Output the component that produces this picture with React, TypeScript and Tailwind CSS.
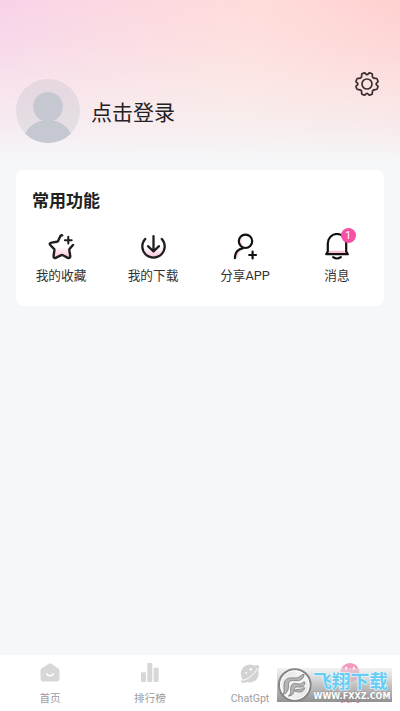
import React from "react";

const cjk = "font-['Roboto','Noto_Sans_CJK_SC',sans-serif]";

function Gear() {
  return (
    <svg className="h-[26px] w-[26px]" viewBox="0 0 26 26" fill="none" stroke="#3b2c2f" strokeWidth="1.7" strokeLinejoin="round">
      <path d="M10.3 1.9 C11.4 1.3 11.4 3.7 13 3.7 S14.6 1.3 15.7 1.9 L18 2.8 C19.2 3.3 17.4 5.2 18.9 6.7 S22.6 6.7 23.1 8 L24 10.3 C24.5 11.5 22.1 11.4 22.1 13 S24.5 14.5 24 15.7 L23.1 18 C22.6 19.3 20.4 17.8 18.9 19.3 S19.2 22.7 18 23.2 L15.7 24.1 C14.6 24.7 14.6 22.3 13 22.3 S11.4 24.7 10.3 24.1 L8 23.2 C6.8 22.7 8.6 20.8 7.1 19.3 S3.4 19.3 2.9 18 L2 15.7 C1.5 14.5 3.9 14.6 3.9 13 S1.5 11.5 2 10.3 L2.9 8 C3.4 6.7 5.6 8.2 7.1 6.7 S6.8 3.3 8 2.8 Z" />
      <circle cx="13" cy="13" r="5" />
    </svg>
  );
}

function Star() {
  return (
    <svg className="h-7 w-7" viewBox="0 0 28 28" fill="none" stroke="#201d20" strokeWidth="2.4" strokeLinecap="round" strokeLinejoin="round">
      <defs>
        <linearGradient id="starFill" x1="0" y1="0" x2="0" y2="1">
          <stop offset=".5" stopColor="#fff" />
          <stop offset="1" stopColor="#f9bfd6" />
        </linearGradient>
      </defs>
      <path d="M15.2 2.4 C14 1.9 13.3 3 12.8 4.2 L11.1 8 Q10.8 8.7 9.9 8.8 L4.6 9.6 C2.4 10 2.2 11 3.7 12.5 L7 15.8 Q7.5 16.3 7.4 17.2 L6.6 22.6 C6.3 25 7.4 25.5 9.2 24.6 L13.9 22.3 Q14.9 21.8 15.9 22.3 L20.4 24.6 C22.2 25.5 23.6 24.8 23.2 22.6 L22.3 17.2 Q22.2 16.4 22.7 15.8 L26 12" fill="url(#starFill)" />
      <path d="M21.3 3.8v6.8M17.9 7.2h6.8" strokeWidth="2" />
    </svg>
  );
}

function Download() {
  return (
    <svg className="h-7 w-7" viewBox="0 0 28 28" fill="none" stroke="#201d20" strokeWidth="2.3" strokeLinecap="round" strokeLinejoin="round">
      <defs>
        <linearGradient id="dlFill" x1="0" y1="0" x2="0" y2="1">
          <stop offset=".45" stopColor="#fff" />
          <stop offset="1" stopColor="#f7bcd8" />
        </linearGradient>
      </defs>
      <path d="M6.2 5.9 A11.2 11.2 0 1 0 22.8 5.9" fill="url(#dlFill)" />
      <path d="M14.5 3.2V18.2M9 13.2 L14.5 18.5 L20 13.2" />
    </svg>
  );
}

function Share() {
  return (
    <svg className="h-7 w-7" viewBox="0 0 28 28" fill="none" stroke="#111" strokeWidth="2.2" strokeLinecap="round">
      <path d="M9.7 5.2 Q7.7 9 11 12.6M5.8 24 Q6.5 18.5 10.5 16.2" stroke="#fbd5e0" />
      <circle cx="14.5" cy="8.3" r="6.7" />
      <path d="M3.9 25.2 C3.9 19.5 7.2 15.6 11.8 15.3M21.6 18.6v6.8M18.2 22h6.8" />
    </svg>
  );
}

function Bell() {
  return (
    <svg className="h-7 w-7" viewBox="0 0 28 28" fill="none" stroke="#111" strokeWidth="2.2" strokeLinecap="round" strokeLinejoin="round">
      <path d="M6 18.9h16" stroke="#f9bed6" />
      <path d="M4.8 18.5V10.2A9.2 9.2 0 0 1 23.2 10.2V18.5L24.8 21.2H3.2Z" />
      <path d="M10.2 24.2 Q14 26.8 17.8 24.2" />
    </svg>
  );
}

function Home() {
  return (
    <svg className="h-5 w-5" viewBox="0 0 20 20">
      <path d="M10 .2 Q10.7.2 11.3.7 L18.4 5.5 Q19.5 6.3 19.5 7.6V16.3Q19.5 18.4 17.4 18.4H2.6Q.5 18.4 .5 16.3V7.6Q.5 6.3 1.6 5.5L8.7.7Q9.3.2 10 .2Z" fill="#d7d7d7" />
      <path d="M6.8 10.9Q10 14.7 13.2 10.9" fill="none" stroke="#fff" strokeWidth="1.6" strokeLinecap="round" />
    </svg>
  );
}

function Chart() {
  return (
    <svg className="h-5 w-5" viewBox="0 0 20 20" fill="#d7d7d7">
      <rect x="1" y="9.3" width="5" height="9.7" rx=".8" />
      <rect x="7.3" y="0" width="5" height="19" rx=".8" />
      <rect x="13.6" y="4.8" width="5" height="14.2" rx=".8" />
    </svg>
  );
}

function Planet() {
  return (
    <svg className="h-5 w-5 overflow-visible" viewBox="0 0 20 20">
      <circle cx="9.8" cy="10.6" r="9" fill="#d3d3d3" />
      <path d="M2.6 14.5C-.9 20.6 2.6 21.8 9 17.5S20.8 5.6 18.7 2.6C17.8 1.5 16.2 1.8 14.6 2.8" fill="#d3d3d3" />
      <path d="M1.6 15.6C1.9 18.2 5.4 17.3 9.6 14.3S16.4 8.3 17.4 5" fill="none" stroke="#fff" strokeWidth="1" />
      <circle cx="10.9" cy="6.4" r="1.2" fill="#fff" />
      <circle cx="6.1" cy="9.9" r=".9" fill="#fff" />
    </svg>
  );
}

function Face() {
  return (
    <svg className="h-5 w-5" viewBox="0 0 20 20">
      <circle cx="10" cy="9.5" r="9.5" fill="#f697bd" />
      <path d="M6.2 4.3v2M13.8 4.3v2" stroke="#fff" strokeWidth="1.8" strokeLinecap="round" />
    </svg>
  );
}

function Tool({ icon, label, badge }: { icon: React.ReactNode; label: string; badge?: string }) {
  return (
    <div className="flex flex-col items-center">
      <div className="relative h-7 w-7">
        {icon}
        {badge && (
          <span className="absolute -top-[5px] left-[17.5px] flex h-[15px] w-[15px] items-center justify-center rounded-full bg-[#f64fa3] text-[11px] leading-none text-white">
            {badge}
          </span>
        )}
      </div>
      <span className="mt-1.5 text-[12.7px] leading-[18px] text-[#333]">{label}</span>
    </div>
  );
}

function Tab({ icon, label, active = false }: { icon: React.ReactNode; label: string; active?: boolean }) {
  return (
    <div className="flex flex-col items-center pt-2">
      {icon}
      <span className={`mt-2 text-[10.6px] leading-4 ${active ? "text-[#ee5d9b]" : "text-[#9c9c9c]"}`}>{label}</span>
    </div>
  );
}

function Watermark() {
  return (
    <svg className="absolute top-[667px] left-[276px] h-9 w-[117px]" viewBox="0 0 117 36">
      <defs>
        <linearGradient id="plate" x1="0" y1="0" x2="0" y2="1">
          <stop offset="0" stopColor="#e4e4e4" stopOpacity=".5" />
          <stop offset=".5" stopColor="#b4b4b4" stopOpacity=".8" />
          <stop offset="1" stopColor="#858585" stopOpacity=".9" />
        </linearGradient>
        <linearGradient id="disc" x1="0" y1="0" x2="1" y2="1">
          <stop offset="0" stopColor="#ddd" />
          <stop offset=".5" stopColor="#f8f8f8" />
          <stop offset="1" stopColor="#ddd" />
        </linearGradient>
      </defs>
      <rect x="1" y="1" width="115" height="34" fill="url(#plate)" />
      <circle cx="18.8" cy="18" r="15.8" fill="url(#disc)" stroke="#858585" strokeWidth="2" />
      <circle cx="18.8" cy="18" r="14.3" fill="none" stroke="#fff" strokeWidth="1" />
      <g fill="#b5b5b5" stroke="#777" strokeWidth=".8" strokeLinejoin="round">
        <path d="M7.2 27.4C9.4 23 6.5 17.3 9.3 13.5 12 9.5 18.5 11.5 21.5 10.7 25 9.7 25.5 7 28 7.3 27.8 12.5 24 14 19 13.7 14.5 13.3 12.7 14 12.5 17.2 12.4 21 12.8 25.7 7.2 27.4Z" />
        <path d="M12.3 29C16.5 27 13.1 20.7 16 17.5 18.5 15.4 21 17.4 24.4 16.9 26.5 16.6 26.2 14.5 28.8 15 29 19.2 26.5 20.4 22.5 20 18.7 19.7 18.5 21.1 18.2 23.4 17.9 26.5 16.6 28.7 12.3 29Z" />
        <path d="M18.5 23.8C19.4 21.9 22 22.7 24.3 22.3 26.5 21.9 26.2 20.5 28.6 20.8 28 25.2 22.8 26.2 18.5 23.8Z" />
      </g>
      <text x="37" y="21" textLength="75" lengthAdjust="spacingAndGlyphs" fontFamily="'Noto Sans CJK SC', sans-serif" fontSize="18.5" fontWeight="700" fill="#69cdf3" stroke="#effbff" strokeWidth="1.2" paintOrder="stroke">飞翔下载</text>
      <text x="37.5" y="32.4" textLength="77" lengthAdjust="spacingAndGlyphs" fontFamily="'DejaVu Sans', sans-serif" fontSize="8.2" fontWeight="700" fill="#fff" stroke="#888" strokeWidth=".5" paintOrder="stroke">WWW.FXXZ.COM</text>
    </svg>
  );
}

export default function App() {
  return (
    <main className={`relative flex h-[711px] w-[400px] flex-col overflow-hidden bg-[#f5f7f9] ${cjk}`}>
      <header className="h-[170px] bg-[linear-gradient(to_bottom,#f5f7f900_0%,#f5f4f42c_25%,#f7f4f378_50%,#f5f5f6bc_75%,#f5f7f9_97%),linear-gradient(100deg,#f8d2e9_0%,#fbd8e2_25%,#ffdcda_60%,#ffcece_100%)]">
        <div className="flex pt-[79px] pr-5 pl-4">
          <svg className="h-16 w-16 rounded-full" viewBox="0 0 64 64">
            <rect width="64" height="64" fill="#bbbdc7" fillOpacity=".3" />
            <circle cx="32" cy="27.7" r="14.8" fill="#c5c8d1" />
            <ellipse cx="32" cy="62" rx="24.5" ry="21" fill="#c5c8d1" />
          </svg>
          <span className="mt-[19px] ml-[11px] text-[21px] leading-[30px] text-[#242124]">点击登录</span>
          <div className="-mt-2 ml-auto">
            <Gear />
          </div>
        </div>
      </header>

      <section className="mx-4 h-[136px] rounded-lg bg-white pt-[19px]">
        <h2 className="pl-4 text-[17px] leading-6 font-bold text-[#202020]">常用功能</h2>
        <div className="mt-5 mr-px -ml-px grid grid-cols-4">
          <Tool icon={<Star />} label="我的收藏" />
          <Tool icon={<Download />} label="我的下载" />
          <Tool icon={<Share />} label="分享APP" />
          <Tool icon={<Bell />} label="消息" badge="1" />
        </div>
      </section>

      <nav className="mt-auto grid h-14 grid-cols-4 bg-white">
        <Tab icon={<Home />} label="首页" />
        <Tab icon={<Chart />} label="排行榜" />
        <Tab icon={<Planet />} label="ChatGpt" />
        <Tab icon={<Face />} label="我的" active />
      </nav>
      <Watermark />
    </main>
  );
}
